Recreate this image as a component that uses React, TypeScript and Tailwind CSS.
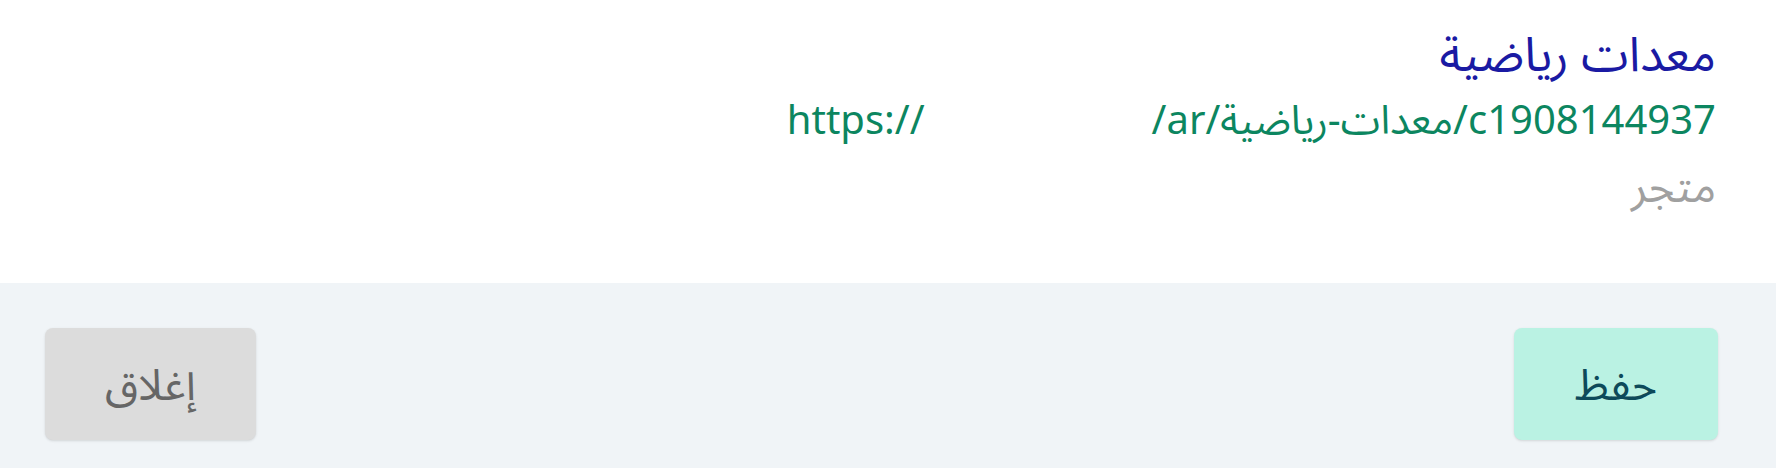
import React from 'react';

const font = { fontFamily: '"Noto Sans", "Noto Sans Arabic", "DejaVu Sans", sans-serif' };

const LinkDetails = () => {
  return (
    <div dir="rtl" className="w-[1776px] h-[468px] bg-white flex flex-col" style={font}>
      {/* Body */}
      <div className="h-[283px] pt-5 pr-[60px] pl-[45px] flex flex-col items-start">
        <h2 className="text-[48px] leading-[66px] text-[#1a1aa3]">معدات رياضية</h2>
        <p dir="ltr" className="self-start text-[40px] leading-[66px] text-[#0c8660] whitespace-nowrap">
          <span>https://</span>
          <span className="inline-block w-[227px]" />
          <span>/ar/معدات-رياضية/c1908144937</span>
        </p>
        <p className="text-[44px] leading-[66px] text-[#a0a0a0]">متجر</p>
      </div>

      {/* Footer */}
      <div className="flex-1 bg-[#f0f4f7] pt-[45px] pr-[58px] pl-[45px] flex justify-between items-start">
        <button className="h-[112px] px-[61px] rounded-lg bg-[#baf2e3] text-[#0d4a5a] text-[43px] shadow-sm">
          حفظ
        </button>
        <button className="h-[112px] px-[60px] rounded-lg bg-[#dcdcdc] text-[#666666] text-[43px] shadow-sm">
          إغلاق
        </button>
      </div>
    </div>
  );
};

export default function App() {
  return <LinkDetails />;
}
